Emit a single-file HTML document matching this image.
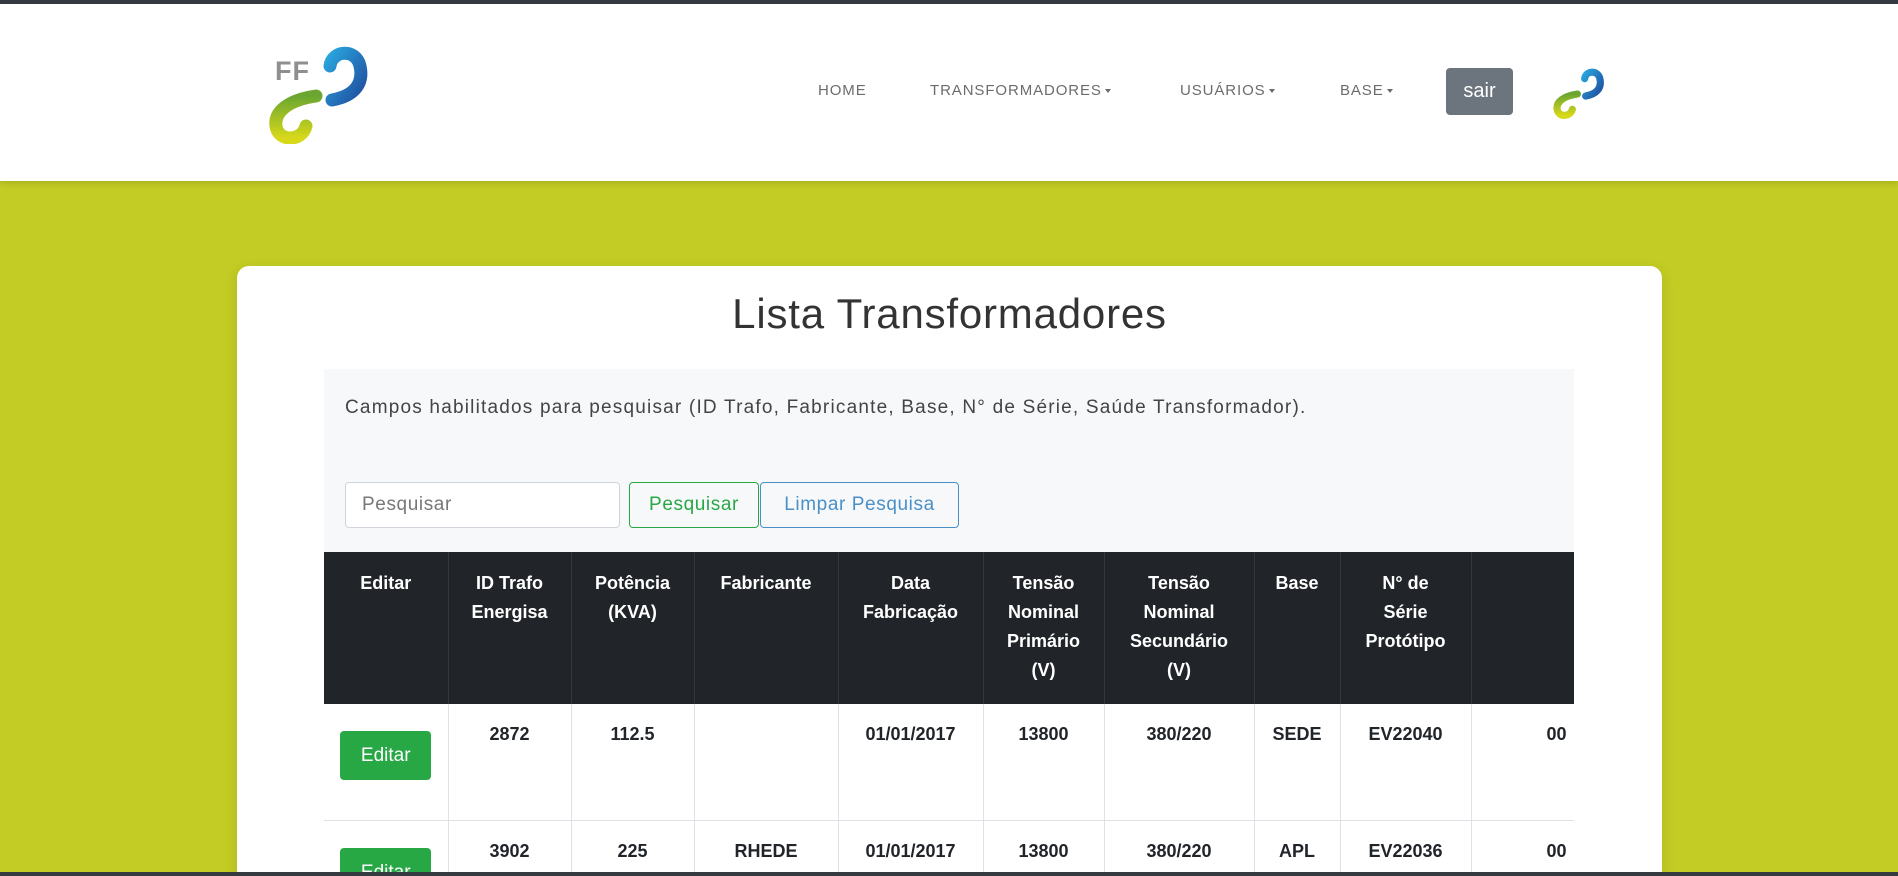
<!DOCTYPE html>
<html><head><meta charset="utf-8"><style>
*{box-sizing:border-box;margin:0;padding:0}
html,body{width:1898px;height:876px;overflow:hidden}
body{background:#c2cc24;font-family:"Liberation Sans",sans-serif;position:relative}
.topbar{position:absolute;left:0;top:0;width:1898px;height:4px;background:#343a40;z-index:5}
.botbar{position:absolute;left:0;top:872px;width:1898px;height:4px;background:#343a40;z-index:5}
header{position:absolute;left:0;top:4px;width:1898px;height:177px;background:#fff;box-shadow:0 2px 6px rgba(0,0,0,.15)}
.nav{position:absolute;top:78px;font-size:15px;color:#6c6c6c;letter-spacing:.9px}
.caret{display:inline-block;border-top:4px solid #6c6c6c;border-left:3px solid transparent;border-right:3px solid transparent;vertical-align:middle;margin-left:3px}
.sair{position:absolute;left:1446px;top:64px;width:67px;height:47px;background:#6c757d;border-radius:4px;color:#fff;font-size:20px;text-align:center;line-height:47px}
.card{position:absolute;left:237px;top:266px;width:1425px;height:610px;background:#fff;border-radius:12px 12px 0 0;box-shadow:0 4px 14px rgba(0,0,0,.1);overflow:hidden}
h1{position:absolute;left:0;width:1425px;top:24px;text-align:center;font-weight:300;font-size:42px;color:#333;letter-spacing:.8px}
.gray{position:absolute;left:87px;top:103px;width:1250px;height:183px;background:#f7f8fa}
.gray p{position:absolute;left:21px;top:28px;font-size:19px;color:#444;letter-spacing:1.2px;white-space:nowrap}
.inp{position:absolute;left:21px;top:113px;width:275px;height:46px;background:#fff;border:1px solid #ced4da;border-radius:4px;font-size:19px;color:#777;padding:11px 16px;letter-spacing:.6px}
.b1{position:absolute;left:305px;top:113px;width:130px;height:46px;border:1px solid #28a745;border-radius:4px;color:#28a745;font-size:19px;text-align:center;line-height:44px;letter-spacing:.6px}
.b2{position:absolute;left:436px;top:113px;width:199px;height:46px;border:1px solid #4a90c8;border-radius:4px;color:#4a90c8;font-size:19px;text-align:center;line-height:44px;letter-spacing:.6px}
.tw{position:absolute;left:87px;top:286px;width:1250px;height:400px;overflow:hidden}
table{border-collapse:collapse;table-layout:fixed;width:1400px}
th{background:#212529;color:#fff;font-weight:bold;font-size:18px;line-height:29px;height:152px;vertical-align:top;padding-top:17px;border-right:1px solid #32383e;text-align:center}
td{height:116px;vertical-align:top;text-align:center;font-weight:bold;font-size:18px;color:#212529;padding-top:20px;border-right:1px solid #dee2e6;border-bottom:1px solid #dee2e6}
.ed{display:inline-block;background:#28a745;color:#fff;font-weight:normal;font-size:19px;width:91px;height:49px;line-height:49px;border-radius:4px;margin-top:14px}
</style></head><body>
<div class="topbar"></div>
<header>
<svg style="position:absolute;left:266px;top:40px" width="106" height="100" viewBox="0 0 106 100">
<defs><linearGradient id="bl" x1="0" y1="0" x2="1" y2="1"><stop offset="0" stop-color="#2aa3dc"/><stop offset="1" stop-color="#1f4fa0"/></linearGradient>
<linearGradient id="gr" x1="0" y1="0" x2="0" y2="1"><stop offset="0" stop-color="#6aa631"/><stop offset="1" stop-color="#d8d81a"/></linearGradient></defs>
<text x="9" y="36" font-family="Liberation Sans" font-size="27" font-weight="bold" fill="#8f8f8f" letter-spacing="1">FF</text>
<path d="M64 22 C66 6 90 4 94 22 C98 40 88 52 66 56" fill="none" stroke="url(#bl)" stroke-width="13" stroke-linecap="round"/>
<path d="M50 52 C22 56 8 68 10 82 C12 98 36 98 40 82" fill="none" stroke="url(#gr)" stroke-width="13" stroke-linecap="round"/>
</svg>
<span class="nav" style="left:818px">HOME</span>
<span class="nav" style="left:930px">TRANSFORMADORES<i class="caret"></i></span>
<span class="nav" style="left:1180px">USUÁRIOS<i class="caret"></i></span>
<span class="nav" style="left:1340px">BASE<i class="caret"></i></span>
<div class="sair">sair</div>
<svg style="position:absolute;left:1552px;top:62px" width="54" height="54" viewBox="0 0 106 100">
<path d="M64 22 C66 6 90 4 94 22 C98 40 88 52 66 56" fill="none" stroke="url(#bl)" stroke-width="14" stroke-linecap="round"/>
<path d="M50 52 C22 56 8 68 10 82 C12 98 36 98 40 82" fill="none" stroke="url(#gr)" stroke-width="14" stroke-linecap="round"/>
</svg>
</header>
<div class="card">
<h1>Lista Transformadores</h1>
<div class="gray">
<p>Campos habilitados para pesquisar (ID Trafo, Fabricante, Base, N° de Série, Saúde Transformador).</p>
<div class="inp">Pesquisar</div>
<div class="b1">Pesquisar</div>
<div class="b2">Limpar Pesquisa</div>
</div>
<div class="tw"><table>
<colgroup><col style="width:124px"><col style="width:123px"><col style="width:123px"><col style="width:144px"><col style="width:145px"><col style="width:121px"><col style="width:150px"><col style="width:86px"><col style="width:131px"><col style="width:253px"></colgroup>
<tr><th>Editar</th><th>ID Trafo<br>Energisa</th><th>Potência<br>(KVA)</th><th>Fabricante</th><th>Data<br>Fabricação</th><th>Tensão<br>Nominal<br>Primário<br>(V)</th><th>Tensão<br>Nominal<br>Secundário<br>(V)</th><th>Base</th><th>N° de<br>Série<br>Protótipo</th><th></th></tr>
<tr><td style="padding-top:13px"><span class="ed">Editar</span></td><td>2872</td><td>112.5</td><td></td><td>01/01/2017</td><td>13800</td><td>380/220</td><td>SEDE</td><td>EV22040</td><td style="text-align:left;padding-left:75px">00</td></tr>
<tr><td style="padding-top:13px"><span class="ed">Editar</span></td><td>3902</td><td>225</td><td>RHEDE</td><td>01/01/2017</td><td>13800</td><td>380/220</td><td>APL</td><td>EV22036</td><td style="text-align:left;padding-left:75px">00</td></tr>
</table></div>
</div>
<div class="botbar"></div>
</body></html>
